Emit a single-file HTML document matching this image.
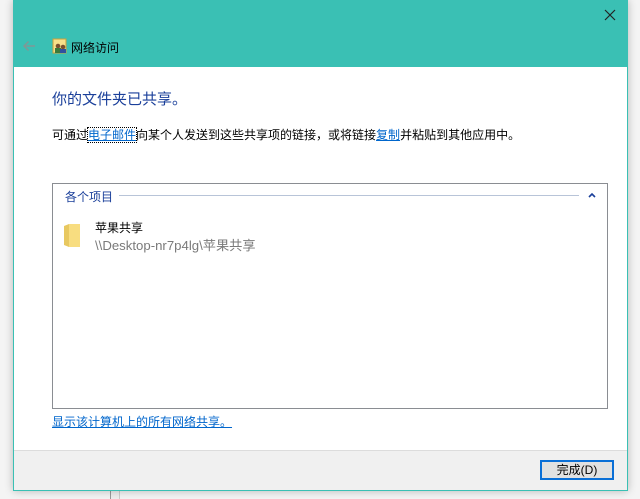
<!DOCTYPE html>
<html><head><meta charset="utf-8"><style>
body{margin:0;width:640px;height:499px;background:#f4f4f4;position:relative;overflow:hidden;font-family:"Liberation Sans","Noto Sans CJK SC",sans-serif;font-size:12px;color:#000}
.win{position:absolute;left:13px;top:0;width:613px;height:490px;border:1px solid #3ac0b4;border-top:none;background:#fff;box-shadow:0 0 8px rgba(0,0,0,.25)}
.hdr{position:absolute;left:0;top:0;right:0;height:67px;background:#3ac0b4}
.a{position:absolute}
.foot{position:absolute;left:0;right:0;top:450px;bottom:0;background:#f0f0f0;border-top:1px solid #dcdcdc}
</style></head><body>
<div class="a" style="left:110px;top:490px;width:8px;height:9px;border-left:1px solid #999;border-right:1px solid #ccc;background:#eee"></div>
<div class="win">
<div class="hdr">
<svg class="a" style="left:8px;top:40px" width="14" height="12"><path d="M13 6H2M6.5 1.5L2 6L6.5 10.5" stroke="#7f9896" stroke-width="1.5" fill="none"/></svg>
<svg class="a" style="left:38px;top:38px" width="16" height="16"><rect x="1" y="1" width="13" height="14" fill="#f7e08a" stroke="#c9a13a"/><circle cx="6" cy="8" r="2.3" fill="#7a5030"/><rect x="3" y="10" width="6" height="5" fill="#3a7a3a"/><circle cx="11" cy="9" r="2.3" fill="#7a5030"/><rect x="8" y="11" width="6" height="4" fill="#3050a0"/></svg>
<div class="a" style="left:57px;top:39px;font-size:12px">网络访问</div>
<svg class="a" style="left:590px;top:9px" width="12" height="12"><path d="M1 1L11 11M11 1L1 11" stroke="#222" stroke-width="1.2"/></svg>
</div>
<div class="a" style="left:38px;top:88px;font-size:15px;color:#1a3f9a">你的文件夹已共享。</div>
<div class="a" style="left:38px;top:126px">可通过<span style="color:#0066cc;text-decoration:underline;outline:1px dotted #000">电子邮件</span>向某个人发送到这些共享项的链接，或将链接<span style="color:#0066cc;text-decoration:underline">复制</span>并粘贴到其他应用中。</div>
<div class="a" style="left:38px;top:183px;width:554px;height:224px;border:1px solid #8a8d92">
<div class="a" style="left:12px;top:4px;color:#1a3f9a">各个项目</div>
<div class="a" style="left:66px;top:11px;width:460px;height:1px;background:#b8c4d8"></div>
<svg class="a" style="left:535px;top:8px" width="8" height="6"><path d="M1 5L4 2L7 5" stroke="#1a3f9a" stroke-width="1.6" fill="none"/></svg>
<svg class="a" style="left:10px;top:39px" width="18" height="25"><path d="M1 3L6 1V24L1 22Z" fill="#e8c860"/><path d="M6 1H17V24H6Z" fill="#f8dd80"/></svg>
<div class="a" style="left:42px;top:35px">苹果共享</div>
<div class="a" style="left:42px;top:51px;color:#7a7a7a;font-size:13.2px">\\Desktop-nr7p4lg\苹果共享</div>
</div>
<div class="a" style="left:38px;top:413px;color:#0066cc;text-decoration:underline">显示该计算机上的所有网络共享。</div>
<div class="foot">
<div class="a" style="left:526px;top:9px;width:70px;height:16px;border:2px solid #0a6fd6;background:#e1e1e1;text-align:center;line-height:16px">完成(D)</div>
</div>
</div>
</body></html>
